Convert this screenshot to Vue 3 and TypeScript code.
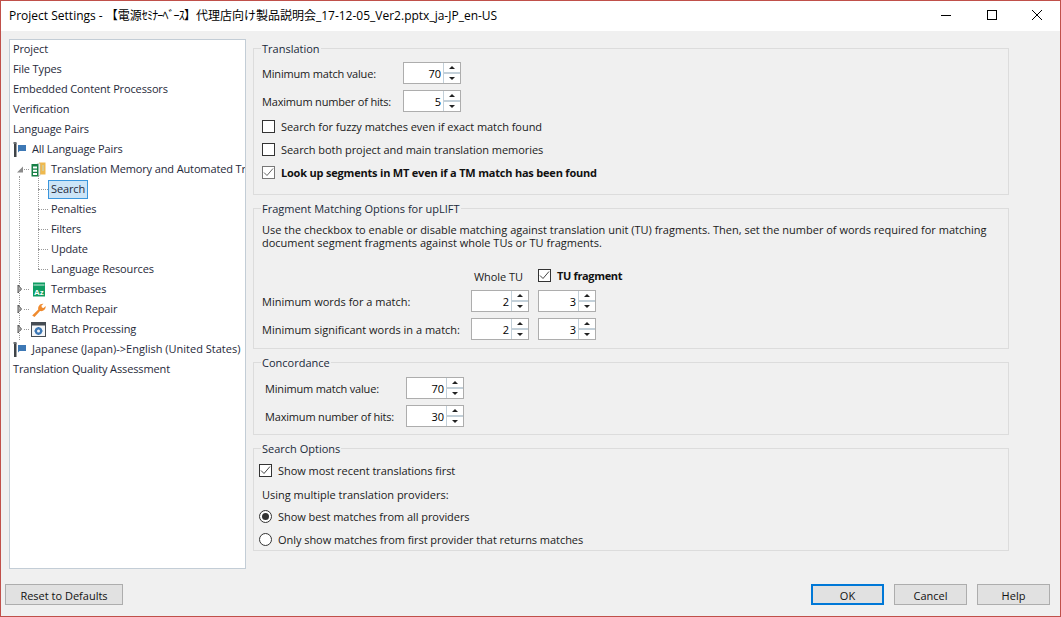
<script setup lang="ts">
interface TreeRow { label: string; depth: number; icon?: string; arrow?: string; selected?: boolean; wide?: boolean }
const rows: TreeRow[] = [
  { label: 'Project', depth: 0 },
  { label: 'File Types', depth: 0 },
  { label: 'Embedded Content Processors', depth: 0 },
  { label: 'Verification', depth: 0 },
  { label: 'Language Pairs', depth: 0 },
  { label: 'All Language Pairs', depth: 0, icon: 'flag' },
  { label: 'Translation Memory and Automated Translation', depth: 1, icon: 'tm', arrow: 'open' },
  { label: 'Search', depth: 2, selected: true },
  { label: 'Penalties', depth: 2 },
  { label: 'Filters', depth: 2 },
  { label: 'Update', depth: 2 },
  { label: 'Language Resources', depth: 2 },
  { label: 'Termbases', depth: 1, icon: 'tb', arrow: 'closed' },
  { label: 'Match Repair', depth: 1, icon: 'wrench', arrow: 'closed' },
  { label: 'Batch Processing', depth: 1, icon: 'batch', arrow: 'closed' },
  { label: 'Japanese (Japan)->English (United States)', depth: 0, icon: 'flag', wide: true },
  { label: 'Translation Quality Assessment', depth: 0 }
]
</script>

<template>
  <div class="win">
    <header class="title">
      <span class="title-text">Project Settings - 【電源<span class="kana">ｾﾐﾅｰﾍﾞｰｽ</span>】代理店向け製品説明会_17-12-05_Ver2.pptx_ja-JP_en-US</span>
      <div class="caps">
        <svg width="12" height="12" viewBox="0 0 12 12"><path d="M1 6.500h10" stroke="#000" /></svg>
        <svg width="12" height="12" viewBox="0 0 12 12"><rect x="1.500" y="1.500" width="9" height="9" fill="none" stroke="#000" /></svg>
        <svg width="12" height="12" viewBox="0 0 12 12"><path d="M1 1l10 10M11 1L1 11" stroke="#000" /></svg>
      </div>
    </header>
    <main class="body">
      <nav class="tree">
        <div class="guide g1"></div>
        <div class="guide g2"></div>
        <div class="rows">
          <div v-for="r in rows" :key="r.label" class="row" :class="['d' + r.depth, { wide: r.wide }]">
            <span v-if="r.depth === 2" class="tick"></span>
            <template v-if="r.arrow">
              <svg v-if="r.arrow === 'open'" class="arrow" width="9" height="9" viewBox="0 0 9 9"><path d="M8 1.500v6H2z" fill="#8a8a8a" /></svg>
              <svg v-else class="arrow" width="9" height="10" viewBox="0 0 9 10"><path d="M3 1l3.500 4L3 9z" fill="#bbb" stroke="#555" /></svg>
              <span class="tick2"></span>
            </template>
            <svg v-if="r.icon === 'flag'" class="ic flag" width="14" height="15" viewBox="0 0 14 15"><rect x="1" y="1" width="2.500" height="14" fill="#3f4347" /><rect x="0.500" y="0" width="3" height="2" fill="#6b6f73" /><path d="M5 3h8v6H6.500L5 10.500z" fill="#3d78b5" /></svg>
            <svg v-else-if="r.icon === 'tm'" class="ic" width="15" height="15" viewBox="0 0 15 15"><path d="M8 0.500h6.500v12H8z" fill="#efb94e" /><path d="M11 3h2v6h-2z" fill="#d9c98d" /><path d="M6.500 1.500H9v12H6.500z" fill="#fff" stroke="#b8b8b8" stroke-width=".6" /><rect x="0.500" y="2" width="7" height="12.500" fill="#167f45" /><path d="M2 4.500h4v2H2zM2 7.700h4v2H2zM2 10.900h4v2H2z" fill="#fff" /></svg>
            <svg v-else-if="r.icon === 'tb'" class="ic" width="15" height="15" viewBox="0 0 15 15"><rect x="2" y="0.500" width="12" height="14" fill="#0f9d63" /><path d="M2.500 3h11" stroke="#fff" stroke-width=".8" /><text x="3" y="12.500" class="az">Az</text></svg>
            <svg v-else-if="r.icon === 'wrench'" class="ic" width="15" height="15" viewBox="0 0 15 15"><path d="M1.200 13.400L7.300 7.500C6.600 4.600 8.800 1.300 12.500 1.700L10.400 3.800l.5 1.700 1.700.5 2-2c.4 3.700-2.700 5.700-5.600 5L3.500 15z" fill="#ef8a2e" /></svg>
            <svg v-else-if="r.icon === 'batch'" class="ic" width="15" height="15" viewBox="0 0 15 15"><rect x=".5" y=".5" width="14" height="14" fill="#f4f6f8" stroke="#454c53" /><rect x="1" y="1" width="13" height="2.500" fill="#454c53" /><circle cx="7.500" cy="9" r="2.600" fill="none" stroke="#3d78b5" stroke-width="2.200" /><path d="M7.500 5v1M7.500 12v1M3.500 9h1M10.500 9h1" stroke="#3d78b5" stroke-width="1.500" /></svg>
            <span class="label" :class="{ sel: r.selected }">{{ r.label }}</span>
          </div>
        </div>
      </nav>

      <section class="panel">
        <fieldset class="fs fs-tr">
          <legend>Translation</legend>
          <div class="form-row"><label class="w1">Minimum match value:</label><div class="spin"><span>70</span><i class="btns"><b class="up"></b><b class="dn"></b></i></div></div>
          <div class="form-row"><label class="w1">Maximum number of hits:</label><div class="spin"><span>5</span><i class="btns"><b class="up"></b><b class="dn"></b></i></div></div>
          <div class="chk"><span class="box"></span>Search for fuzzy matches even if exact match found</div>
          <div class="chk"><span class="box"></span>Search both project and main translation memories</div>
          <div class="chk strong"><span class="box grey"><svg width="11" height="11" viewBox="0 0 11 11"><path d="M1 5.500l3 3 6-7" fill="none" stroke="#666" /></svg></span>Look up segments in MT even if a TM match has been found</div>
        </fieldset>

        <fieldset class="fs fs-fr">
          <legend>Fragment Matching Options for upLIFT</legend>
          <p class="desc">Use the checkbox to enable or disable matching against translation unit (TU) fragments. Then, set the number of words required for matching document segment fragments against whole TUs or TU fragments.</p>
          <div class="cols"><span class="whole">Whole TU</span><div class="chk strong inline"><span class="box"><svg width="11" height="11" viewBox="0 0 11 11"><path d="M1 5.500l3 3 6-7" fill="none" stroke="#444" /></svg></span>TU fragment</div></div>
          <div class="form-row tight"><label class="w2">Minimum words for a match:</label><div class="spin"><span>2</span><i class="btns"><b class="up"></b><b class="dn"></b></i></div><div class="spin"><span>3</span><i class="btns"><b class="up"></b><b class="dn"></b></i></div></div>
          <div class="form-row tight"><label class="w2">Minimum significant words in a match:</label><div class="spin"><span>2</span><i class="btns"><b class="up"></b><b class="dn"></b></i></div><div class="spin"><span>3</span><i class="btns"><b class="up"></b><b class="dn"></b></i></div></div>
        </fieldset>

        <fieldset class="fs fs-co">
          <legend>Concordance</legend>
          <div class="form-row"><label class="w1">Minimum match value:</label><div class="spin"><span>70</span><i class="btns"><b class="up"></b><b class="dn"></b></i></div></div>
          <div class="form-row"><label class="w1">Maximum number of hits:</label><div class="spin"><span>30</span><i class="btns"><b class="up"></b><b class="dn"></b></i></div></div>
        </fieldset>

        <fieldset class="fs fs-so">
          <legend>Search Options</legend>
          <div class="chk"><span class="box"><svg width="11" height="11" viewBox="0 0 11 11"><path d="M1 5.500l3 3 6-7" fill="none" stroke="#444" /></svg></span>Show most recent translations first</div>
          <div class="using">Using multiple translation providers:</div>
          <div class="radio"><span class="dot on"></span>Show best matches from all providers</div>
          <div class="radio"><span class="dot"></span>Only show matches from first provider that returns matches</div>
        </fieldset>
      </section>
    </main>
    <footer class="foot">
      <button class="btn reset">Reset to Defaults</button>
      <div class="right">
        <button class="btn ok">OK</button>
        <button class="btn">Cancel</button>
        <button class="btn">Help</button>
      </div>
    </footer>
  </div>
</template>

<style>
html, body { margin: 0; padding: 0; }
</style>

<style scoped>
.win {
  box-sizing: border-box;
  width: 1061px;
  height: 617px;
  border: 1px solid #c0504a;
  background: #f0f0f0;
  display: flex;
  flex-direction: column;
  font: 11px/15px "Open Sans", "Noto Sans CJK JP", sans-serif;
  color: #1a1a1a;
  overflow: hidden;
}
.title {
  height: 30px;
  flex: none;
  background: #fff;
  display: flex;
  align-items: center;
  justify-content: space-between;
  padding-left: 8px;
}
.title-text { font: 12px/16px "Open Sans", "Noto Sans CJK JP", sans-serif; color: #000; white-space: nowrap; }
.kana { letter-spacing: -0.85px; }
.caps { display: flex; gap: 33.500px; padding-right: 17px; margin-bottom: 2px; }
.body { flex: 1; display: flex; padding: 8px 8px 0; gap: 7px; min-height: 0; }
.tree {
  position: relative;
  box-sizing: border-box;
  width: 237px;
  height: 530px;
  flex: none;
  background: #fff;
  border: 1px solid #c3cdd6;
  overflow: hidden;
  letter-spacing: -0.13px;
}
.rows { margin-top: -1px; }
.row { display: flex; align-items: center; height: 20px; white-space: nowrap; padding-left: 3px; color: #1f2a3a; }
.row.wide { letter-spacing: 0; }
.row.d1 { padding-left: 5px; }
.row.d2 { padding-left: 28px; }
.tick { width: 10px; border-top: 1px dotted #999; flex: none; }
.arrow { flex: none; }
.tick2 { width: 5px; border-top: 1px dotted #999; flex: none; margin-right: 2px; }
.ic { flex: none; margin-right: 5px; }
.label { padding: 0 3px; line-height: 15px; margin-left: -3px; position: relative; top: -1px; }
.d2 .label { margin-left: 0; }
.label.sel {
  top: 0;
  background: #cce4f7;
  border: 1px solid #3a96dd;
  padding: 0 2px 2px;
}
.guide { position: absolute; border-left: 1px dotted #999; }
.g1 { left: 9px; top: 136px; height: 164px; }
.g2 { left: 28px; top: 136px; height: 93px; }
.panel { flex: 1; display: flex; flex-direction: column; min-width: 0; padding-right: 43px; }
.fs {
  margin: 0;
  border: 1px solid #dcdcdc;
  padding: 0 8px;
  min-width: 0;
  box-sizing: border-box;
}
legend { padding: 0 1px; margin-left: -1px; line-height: 15px; color: #1a2a3a; }
.fs-tr { height: 154px; margin-top: 2px; }
.fs-fr { height: 148px; margin-top: 6px; }
.fs-co { height: 80px; margin-top: 6px; padding-left: 11px; }
.fs-co legend { margin-left: -4px; }
.fs-so { height: 110px; margin-top: 6px; padding-left: 5px; }
.fs-so legend { margin-left: 2px; }
.form-row { display: flex; align-items: center; height: 22px; margin-bottom: 6px; }
.fs-tr .form-row:first-of-type { margin-top: 6px; }
.fs-co .form-row:first-of-type { margin-top: 7px; }
.form-row.tight { gap: 9px; }
.w1 { width: 141px; flex: none; letter-spacing: -0.18px; }
.w2 { width: 200px; flex: none; }
.spin {
  box-sizing: border-box;
  width: 58px;
  height: 22px;
  flex: none;
  background: #fff;
  border: 1px solid #adadad;
  display: flex;
  justify-content: flex-end;
  align-items: center;
  color: #000;
}
.spin span { padding-right: 2px; }
.btns { display: flex; flex-direction: column; width: 16px; height: 20px; border-left: 1px solid #c3d0d9; }
.up, .dn { flex: 1; display: flex; align-items: center; justify-content: center; }
.up { border-bottom: 2px solid #c3d0d9; }
.up::after { content: ""; border: 3.500px solid transparent; border-top: 0; border-bottom: 3.500px solid #222; }
.dn::after { content: ""; border: 3.500px solid transparent; border-bottom: 0; border-top: 3.500px solid #222; }
.chk, .radio { display: flex; align-items: center; height: 16px; letter-spacing: -0.05px; }
.fs-tr .chk { margin-bottom: 7px; }
.box {
  box-sizing: border-box;
  width: 13px;
  height: 13px;
  border: 1px solid #333;
  background: #fff;
  margin-right: 6px;
  flex: none;
  display: flex;
  align-items: center;
  justify-content: center;
}
.box.grey { border-color: #777; }
.strong { font-weight: 700; color: #111; letter-spacing: -0.2px; }
.strong.inline { letter-spacing: -0.35px; }
.desc { margin: 7px 0 0; width: 738px; line-height: 13px; }
.cols { display: flex; align-items: center; margin: 18px 0 7px 212px; height: 16px; }
.whole { width: 64px; flex: none; margin-top: 2px; letter-spacing: -0.05px; }
.using { margin: 9px 0 6px 3px; }
.fs-so .chk { margin-top: 6px; }
.radio { margin-bottom: 7px; }
.dot {
  box-sizing: border-box;
  width: 13px;
  height: 13px;
  border: 1px solid #333;
  border-radius: 50%;
  background: #fff;
  margin-right: 6px;
  position: relative;
  flex: none;
}
.dot.on::after { content: ""; position: absolute; inset: 2px; border-radius: 50%; background: #333; }
.foot { height: 46px; flex: none; display: flex; justify-content: space-between; align-items: flex-start; padding: 14px 10px 0 4px; box-sizing: border-box; }
.right { display: flex; gap: 10px; }
.btn {
  box-sizing: border-box;
  width: 73px;
  height: 21px;
  background: #e1e1e1;
  border: 1px solid #adadad;
  font: inherit;
  color: #111;
  padding: 1px 0 0;
}
.btn.reset { width: 118px; }
.btn.ok { border: 2px solid #0078d7; }
.az { font: 700 8px "Liberation Sans", sans-serif; fill: #fff; letter-spacing: 0; }
</style>
